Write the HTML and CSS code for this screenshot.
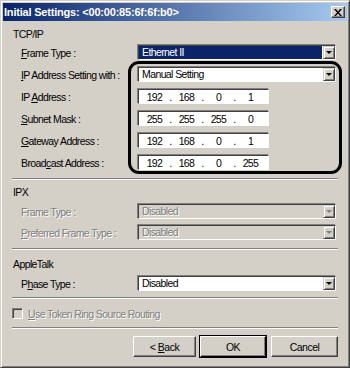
FILE: index.html
```html
<!DOCTYPE html>
<html lang="en">
<head>
  <meta charset="UTF-8" />
  <title>Initial Settings</title>
  <link rel="stylesheet" href="styles.css">
</head>
<body>
  <div class="window">
    <div class="titlebar">
      <span class="title">Initial Settings: &lt;00:00:85:6f:6f:b0&gt;</span>
      <span class="close">
        <svg width="8" height="7" viewBox="0 0 8 7"><path d="M0 0h2l2 2.5L6 0h2L5 3.5 8 7H6L4 4.5 2 7H0l3-3.5z" fill="#000"/></svg>
      </span>
    </div>

    <div class="body">
      <!-- TCP/IP -->
      <section class="group tcpip">
        <h2>TCP/IP</h2>
        <div class="row">
          <label><u>F</u>rame Type :</label>
          <div class="combo focused"><span class="value">Ethernet II</span><span class="drop"></span></div>
        </div>
        <div class="row">
          <label><u>I</u>P Address Setting with :</label>
          <div class="combo"><span class="value">Manual Setting</span><span class="drop"></span></div>
        </div>
        <div class="row">
          <label>IP <u>A</u>ddress :</label>
          <div class="ip"><span>192</span><i>.</i><span>168</span><i>.</i><span>0</span><i>.</i><span>1</span></div>
        </div>
        <div class="row">
          <label><u>S</u>ubnet Mask :</label>
          <div class="ip"><span>255</span><i>.</i><span>255</span><i>.</i><span>255</span><i>.</i><span>0</span></div>
        </div>
        <div class="row">
          <label><u>G</u>ateway Address :</label>
          <div class="ip"><span>192</span><i>.</i><span>168</span><i>.</i><span>0</span><i>.</i><span>1</span></div>
        </div>
        <div class="row">
          <label>Broad<u>c</u>ast Address :</label>
          <div class="ip"><span>192</span><i>.</i><span>168</span><i>.</i><span>0</span><i>.</i><span>255</span></div>
        </div>
        <div class="callout"></div>
      </section>

      <hr class="sep sep-tcp">

      <!-- IPX -->
      <section class="group ipx">
        <h2>IPX</h2>
        <div class="row">
          <label class="disabled">Frame Type :</label>
          <div class="combo disabled"><span class="value">Disabled</span><span class="drop"></span></div>
        </div>
        <div class="row">
          <label class="disabled"><u>P</u>referred Frame Type :</label>
          <div class="combo disabled"><span class="value">Disabled</span><span class="drop"></span></div>
        </div>
      </section>

      <hr class="sep sep-ipx">

      <!-- AppleTalk -->
      <section class="group appletalk">
        <h2>AppleTalk</h2>
        <div class="row">
          <label>P<u>h</u>ase Type :</label>
          <div class="combo"><span class="value">Disabled</span><span class="drop"></span></div>
        </div>
      </section>

      <hr class="sep sep-apple">

      <div class="check disabled">
        <span class="box"></span>
        <span><u>U</u>se Token Ring Source Routing</span>
      </div>

      <hr class="sep sep-check">

      <div class="buttons">
        <button class="btn back">&lt; <u>B</u>ack</button>
        <button class="btn default">OK</button>
        <button class="btn cancel">Cancel</button>
      </div>
    </div>
  </div>
</body>
</html>
```

FILE: styles.css
```css
/* Base */
* { margin: 0; padding: 0; box-sizing: border-box; }
body { width: 350px; height: 368px; background: #d4d0c8; font-family: "Liberation Sans", Arial, sans-serif; font-size: 10.5px; letter-spacing: -0.6px; color: #000; overflow: hidden; }
u { text-decoration: underline; text-underline-offset: 1px; }

/* Window frame */
.window { width: 350px; height: 368px; background: #d4d0c8; border: 1px solid; border-color: #d4d0c8 #404040 #404040 #d4d0c8; padding: 2px; box-shadow: inset 1px 1px 0 #fff, inset -1px -1px 0 #808080; }

/* Title bar */
.titlebar { height: 18px; display: flex; align-items: center; justify-content: space-between; padding: 0 2px 0 1px; background: linear-gradient(to right, #0a246a, #a6caf0); }
.title { color: #fff; font-weight: bold; font-size: 11px; letter-spacing: -0.2px; }
.close { width: 14px; height: 12px; display: flex; align-items: center; justify-content: center; background: #d4d0c8; border: 1px solid; border-color: #fff #404040 #404040 #fff; box-shadow: inset -1px -1px 0 #808080; }

/* Body */
.body { display: flex; flex-direction: column; padding: 7px 10px 0 10px; }
.group { display: flex; flex-direction: column; gap: 7px; }
.group h2 { font-size: 10.5px; font-weight: normal; line-height: 13px; margin-bottom: -3px; }
.ipx { gap: 6px; }
.ipx h2 { margin-bottom: -1px; }
.appletalk h2 { margin-bottom: -2px; }
.row { display: flex; align-items: center; height: 15px; padding-left: 8px; }
.row label { width: 117px; flex: none; white-space: nowrap; }
.disabled { color: #808080; text-shadow: 1px 1px 0 #fff; }

/* Combo boxes */
.combo { width: 198px; height: 15px; display: flex; background: #fff; border: 1px solid; border-color: #404040 #fff #fff #404040; box-shadow: -1px -1px 0 #808080, 1px 1px 0 #d4d0c8; }
.combo .value { flex: 1; line-height: 13px; padding-left: 3px; }
.combo.focused .value { background: #0a246a; color: #fff; margin-right: 1px; }
.combo.disabled { background: #d4d0c8; }
.drop { width: 12px; height: 13px; flex: none; position: relative; background: #d4d0c8; border: 1px solid; border-color: #d4d0c8 #404040 #404040 #d4d0c8; box-shadow: inset 1px 1px 0 #fff, inset -1px -1px 0 #808080; }
.drop::after { content: ""; position: absolute; left: 2px; top: 4px; border-left: 3px solid transparent; border-right: 3px solid transparent; border-top: 3px solid #000; }
.combo.disabled .drop::after { border-top-color: #808080; }

/* IP fields */
.ip { width: 131px; height: 15px; display: flex; align-items: center; background: #fff; border: 1px solid; border-color: #404040 #fff #fff #404040; box-shadow: -1px -1px 0 #808080, 1px 1px 0 #d4d0c8; padding-left: 4px; }
.ip span { width: 23px; text-align: center; }
.ip i { font-style: normal; width: 9px; text-align: center; }

/* Highlight around the address settings */
.tcpip { position: relative; }
.callout { position: absolute; left: 115px; top: 33px; width: 214px; height: 113px; border: 3px solid #000; border-radius: 11px; pointer-events: none; }

/* Separators */
.sep { border: none; border-top: 1px solid #808080; border-bottom: 1px solid #fff; margin-left: -1px; width: 326px; flex: none; }
.sep-tcp { margin-top: 8px; margin-bottom: 6px; }
.sep-ipx { margin-top: 8px; margin-bottom: 8px; }
.sep-apple { margin-top: 6px; margin-bottom: 8px; }
.sep-check { margin-top: 7px; margin-bottom: 7px; }

/* Checkbox */
.check { display: flex; align-items: center; gap: 5px; height: 13px; margin-left: -1px; }
.check .box { width: 11px; height: 11px; background: #d4d0c8; border: 1px solid; border-color: #808080 #fff #fff #808080; box-shadow: inset 1px 1px 0 #404040; }

/* Buttons */
.buttons { display: flex; justify-content: flex-end; margin-right: -1px; }
.btn { height: 21px; font-family: inherit; font-size: 10.5px; letter-spacing: -0.5px; color: #000; background: #d4d0c8; border: 1px solid; border-color: #fff #404040 #404040 #fff; box-shadow: inset -1px -1px 0 #808080; }
.btn.back { width: 63px; }
.btn.default { width: 66px; margin-left: 4px; outline: 1px solid #000; border-color: #fff #000 #000 #fff; }
.btn.cancel { width: 67px; margin-left: 5px; }
```
